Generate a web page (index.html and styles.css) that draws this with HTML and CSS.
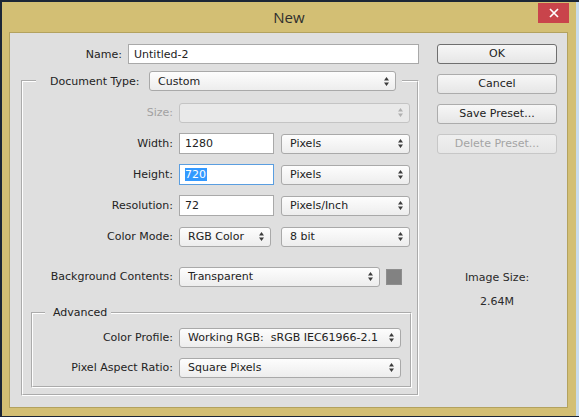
FILE: index.html
```html
<!DOCTYPE html>
<html>
<head>
<meta charset="utf-8">
<title>New</title>
<link rel="stylesheet" href="styles.css">
</head>
<body>
<div class="window">
  <div class="titlebar">
    <div class="title">New</div>
    <div class="close"><svg width="10" height="10" viewBox="0 0 10 10"><path d="M1 1 L9 9 M9 1 L1 9" stroke="#fff" stroke-width="1.7" fill="none"/></svg></div>
  </div>
  <div class="client">
    <div class="main">
      <div class="name-row">
        <span class="lbl name-lbl">Name:</span>
        <div class="input name-input">Untitled-2</div>
      </div>
      <fieldset class="group">
        <legend class="group-legend">
          <span class="lbl doc-lbl">Document Type:</span>
          <div class="select w-doc"><span>Custom</span><svg class="arr" width="5" height="9" viewBox="0 0 5 9"><path d="M2.5 0 L5 3.5 H0 Z M0 5.5 H5 L2.5 9 Z" fill="#3c3c3c"/></svg></div>
        </legend>
        <div class="form">
          <div class="row">
            <span class="lbl col disabled">Size:</span>
            <div class="select disabled-sel w-size"><span></span><svg class="arr" width="5" height="9" viewBox="0 0 5 9"><path d="M2.5 0 L5 3.5 H0 Z M0 5.5 H5 L2.5 9 Z" fill="#b0b0b0"/></svg></div>
          </div>
          <div class="row">
            <span class="lbl col">Width:</span>
            <div class="ctrls">
              <div class="input w-num">1280</div>
              <div class="select w-unit"><span>Pixels</span><svg class="arr" width="5" height="9" viewBox="0 0 5 9"><path d="M2.5 0 L5 3.5 H0 Z M0 5.5 H5 L2.5 9 Z" fill="#3c3c3c"/></svg></div>
            </div>
          </div>
          <div class="row">
            <span class="lbl col">Height:</span>
            <div class="ctrls">
              <div class="input focused w-num"><span class="sel-text">720</span></div>
              <div class="select w-unit"><span>Pixels</span><svg class="arr" width="5" height="9" viewBox="0 0 5 9"><path d="M2.5 0 L5 3.5 H0 Z M0 5.5 H5 L2.5 9 Z" fill="#3c3c3c"/></svg></div>
            </div>
          </div>
          <div class="row">
            <span class="lbl col">Resolution:</span>
            <div class="ctrls">
              <div class="input w-num">72</div>
              <div class="select w-unit"><span>Pixels/Inch</span><svg class="arr" width="5" height="9" viewBox="0 0 5 9"><path d="M2.5 0 L5 3.5 H0 Z M0 5.5 H5 L2.5 9 Z" fill="#3c3c3c"/></svg></div>
            </div>
          </div>
          <div class="row">
            <span class="lbl col">Color Mode:</span>
            <div class="ctrls">
              <div class="select w-mode"><span>RGB Color</span><svg class="arr" width="5" height="9" viewBox="0 0 5 9"><path d="M2.5 0 L5 3.5 H0 Z M0 5.5 H5 L2.5 9 Z" fill="#3c3c3c"/></svg></div>
              <div class="select w-unit"><span>8 bit</span><svg class="arr" width="5" height="9" viewBox="0 0 5 9"><path d="M2.5 0 L5 3.5 H0 Z M0 5.5 H5 L2.5 9 Z" fill="#3c3c3c"/></svg></div>
            </div>
          </div>
          <div class="row bg-row">
            <span class="lbl col">Background Contents:</span>
            <div class="bg-ctrls">
              <div class="select w-bg"><span>Transparent</span><svg class="arr" width="5" height="9" viewBox="0 0 5 9"><path d="M2.5 0 L5 3.5 H0 Z M0 5.5 H5 L2.5 9 Z" fill="#3c3c3c"/></svg></div>
              <div class="swatch"></div>
            </div>
          </div>
        </div>
        <fieldset class="advanced">
          <legend class="adv-legend">Advanced</legend>
          <div class="adv-form">
            <div class="row adv-row">
              <span class="lbl acol">Color Profile:</span>
              <div class="select w-adv"><span>Working RGB:&nbsp; sRGB IEC61966-2.1</span><svg class="arr" width="5" height="9" viewBox="0 0 5 9"><path d="M2.5 0 L5 3.5 H0 Z M0 5.5 H5 L2.5 9 Z" fill="#3c3c3c"/></svg></div>
            </div>
            <div class="row adv-row">
              <span class="lbl acol">Pixel Aspect Ratio:</span>
              <div class="select w-adv"><span>Square Pixels</span><svg class="arr" width="5" height="9" viewBox="0 0 5 9"><path d="M2.5 0 L5 3.5 H0 Z M0 5.5 H5 L2.5 9 Z" fill="#3c3c3c"/></svg></div>
            </div>
          </div>
        </fieldset>
      </fieldset>
    </div>
    <div class="side">
      <div class="btn default">OK</div>
      <div class="btn">Cancel</div>
      <div class="btn">Save Preset...</div>
      <div class="btn disabled-btn">Delete Preset...</div>
      <div class="image-size">
        <div>Image Size:</div>
        <div>2.64M</div>
      </div>
    </div>
  </div>
</div>
</body>
</html>
```
FILE: styles.css
```css
* { box-sizing: border-box; }
html, body { margin: 0; padding: 0; }
body {
  width: 579px;
  height: 417px;
  overflow: hidden;
  background: #1c2636;
  font-family: "DejaVu Sans", Verdana, sans-serif;
  font-size: 11px;
  color: #222;
}
.window {
  margin: 2px 0 0 2px;
  width: 577px;
  height: 414px;
  background: #d3bf74;
  border-right: 3px solid #c9dcec;
  display: flex;
  flex-direction: column;
}
.titlebar {
  height: 30px;
  display: grid;
  grid-template-columns: 1fr auto 1fr;
}
.title {
  grid-column: 2;
  font-family: "Open Sans", sans-serif;
  font-size: 15px;
  line-height: 30px;
  color: #2e2e2e;
}
.close {
  grid-column: 3;
  justify-self: end;
  margin: 1px 7px 0 0;
  width: 31px;
  height: 20px;
  background: #c9444b;
  display: flex;
  align-items: center;
  justify-content: center;
}
.client {
  height: 376px;
  margin: 0 8px 8px 7px;
  background: #dfdfdf;
  border: 1px solid #b3a25f;
  display: flex;
}
.main {
  width: 409px;
  padding: 11px 0 0 11px;
}
.lbl { white-space: nowrap; color: #232323; }
.disabled { color: #a2a2a2; }
.name-row {
  display: flex;
  align-items: center;
  gap: 6px;
  height: 20px;
}
.name-lbl { width: 101px; text-align: right; }
.input {
  height: 21px;
  background: #fff;
  border: 1px solid #a9a9a9;
  padding-left: 5px;
  display: flex;
  align-items: center;
  white-space: nowrap;
}
.name-input { flex: 1; height: 20px; }
.focused { border-color: #5a9ee0; }
.sel-text { background: #3399ff; color: #fff; padding-right: 1px; }
.group {
  margin: 7px 0 0;
  padding: 11px 0 6px;
  border: 2px groove #ffffff;
  min-width: 0;
}
.group-legend {
  display: flex;
  align-items: center;
  gap: 5px;
  margin-left: 13px;
  padding: 0 6px 0 14px;
}
.doc-lbl { width: 94px; }
.select {
  height: 20px;
  border: 1px solid #a9a9a9;
  border-radius: 3px;
  background: linear-gradient(#fdfdfd, #ededed);
  display: flex;
  align-items: center;
  justify-content: space-between;
  padding: 0 6px 0 8px;
  white-space: nowrap;
}
.disabled-sel {
  background: #e9e9e9;
  border-color: #c4c4c4;
}
.arr { flex: none; }
.w-doc { width: 247px; }
.w-size { width: 231px; }
.w-num { width: 95px; }
.w-unit { width: 129px; margin-left: auto; }
.w-mode { width: 92px; }
.w-bg { width: 201px; }
.w-adv { width: 222px; }
.form {
  display: flex;
  flex-direction: column;
  gap: 10px;
}
.row {
  display: flex;
  align-items: center;
  gap: 6px;
  height: 21px;
}
.col { width: 150px; text-align: right; }
.ctrls {
  width: 231px;
  display: flex;
  align-items: center;
}
.bg-row { margin-top: 9px; }
.bg-ctrls {
  display: flex;
  align-items: center;
  gap: 6px;
}
.swatch {
  width: 16px;
  height: 16px;
  background: #828282;
  border: 1px solid #8e8e8e;
}
.advanced {
  margin: 19px 5px 0 8px;
  padding: 7px 0 8px;
  border: 2px groove #ffffff;
  min-width: 0;
}
.adv-legend {
  margin-left: 12px;
  padding: 0 4px 0 8px;
  line-height: 14px;
}
.adv-form {
  display: flex;
  flex-direction: column;
  gap: 9px;
}
.acol { width: 140px; text-align: right; }
.side {
  flex: 1;
  padding: 11px 0 0 18px;
  display: flex;
  flex-direction: column;
  gap: 10px;
}
.btn {
  width: 120px;
  height: 20px;
  border: 1px solid #acacac;
  border-radius: 3px;
  background: linear-gradient(#f7f7f7, #e6e6e6);
  text-align: center;
  line-height: 18px;
  color: #222;
}
.default { border-color: #6f6f6f; }
.disabled-btn {
  color: #a4a4a4;
  border-color: #c7c7c7;
  background: linear-gradient(#efefef, #e6e6e6);
}
.image-size {
  width: 120px;
  margin-top: 102px;
  text-align: center;
  line-height: 24px;
  color: #2a2a2a;
}
```
